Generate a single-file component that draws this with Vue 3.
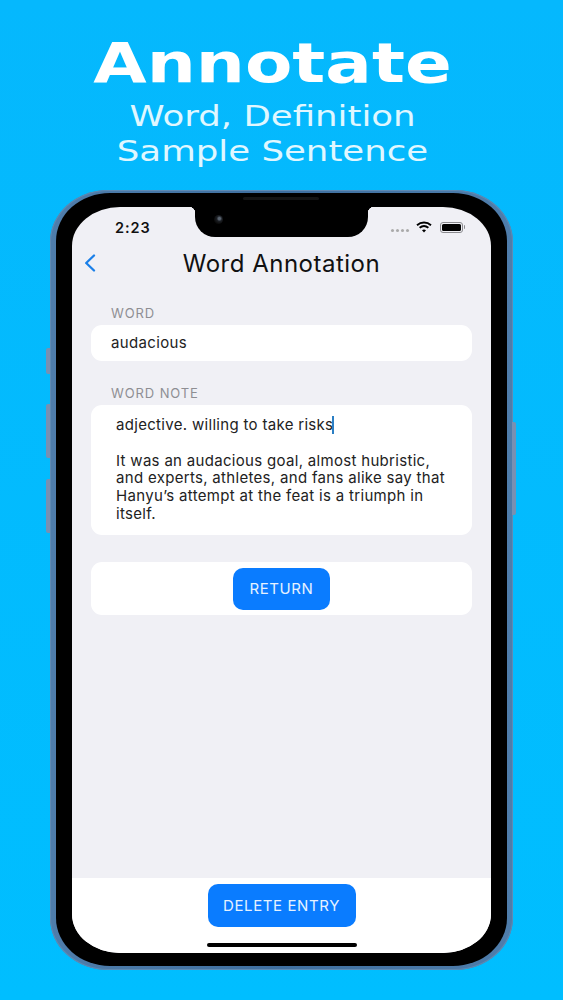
<script setup>
const noteLines = [
  'It was an audacious goal, almost hubristic,',
  'and experts, athletes, and fans alike say that',
  'Hanyu\u2019s attempt at the feat is a triumph in',
  'itself.'
]
</script>

<template>
  <div class="page">
    <header class="hero">
      <h1 class="title">Annotate</h1>
      <p class="sub">Word, Definition</p>
      <p class="sub">Sample Sentence</p>
    </header>

    <div class="phone">
      <i class="side left one"></i>
      <i class="side left two"></i>
      <i class="side left three"></i>
      <i class="side right"></i>
      <div class="bezel">
        <span class="speaker"></span>
        <div class="screen">
          <div class="notch">
            <span class="camera"></span>
          </div>

          <div class="status">
            <span class="time">2:23</span>
            <div class="status-icons">
              <span class="dots"><i></i><i></i><i></i><i></i></span>
              <svg class="wifi" width="16" height="12" viewBox="0 0 16 12">
                <path d="M1 4.2C5 .6 11 .6 15 4.2" fill="none" stroke="#000" stroke-width="1.9" />
                <path d="M3.6 6.8c2.6-2.2 6.2-2.2 8.8 0" fill="none" stroke="#000" stroke-width="1.9" />
                <path d="M6 9.2c1.2-.9 2.8-.9 4 0L8 11.4z" fill="#000" />
              </svg>
              <span class="battery"><i></i></span>
            </div>
          </div>

          <nav class="navbar">
            <svg class="back" width="14" height="20" viewBox="0 0 14 20">
              <path d="M11 2.5 3.2 10 11 17.5" fill="none" stroke="#1a7fe8" stroke-width="2.3" stroke-linecap="round" stroke-linejoin="round" />
            </svg>
            <span class="nav-title">Word Annotation</span>
          </nav>

          <main class="form">
            <label class="label first">WORD</label>
            <div class="card word">audacious</div>

            <label class="label second">WORD NOTE</label>
            <div class="card note">
              <div class="line def">adjective. willing to take risks<span class="caret"></span></div>
              <div class="line blank"></div>
              <div v-for="l in noteLines" :key="l" class="line">{{ l }}</div>
            </div>

            <div class="card action">
              <button class="btn return">RETURN</button>
            </div>
          </main>

          <footer class="bottom">
            <button class="btn delete">DELETE ENTRY</button>
            <span class="home"></span>
          </footer>
        </div>
      </div>
    </div>
  </div>
</template>

<style>
html, body { margin: 0; background: #00bbff; }
</style>

<style scoped>
.page {
  width: 563px;
  height: 1000px;
  overflow: hidden;
  box-sizing: border-box;
  background: linear-gradient(#05b8fd, #00beff);
  display: flex;
  flex-direction: column;
  align-items: center;
}
.hero {
  height: 190px;
  flex: none;
  text-align: center;
  color: #fff;
  font-family: "DejaVu Sans", sans-serif;
  box-sizing: border-box;
  padding: 31px 18px 0 0;
  width: 100%;
}
.title {
  margin: 0 0 4px;
  font-size: 55px;
  line-height: 64px;
  font-weight: 700;
  transform: scaleX(1.255);
}
.sub {
  margin: 0;
  font-size: 28px;
  line-height: 35px;
  font-weight: 400;
  color: #e0f7ff;
  transform: scaleX(1.27);
}
.phone {
  position: relative;
  flex: none;
  width: 463px;
  height: 780px;
  box-sizing: border-box;
  padding: 3px 6px 4px;
  border-radius: 58px / 52px;
  background: linear-gradient(90deg, #4f7dab, #3f6f9f 50%, #4f7dab);
  box-shadow: inset 0 0 0 1px #5f8ab3;
}
.side {
  position: absolute;
  width: 4px;
  background: #7890b2;
}
.side.left { left: -4px; border-radius: 2px 0 0 2px; }
.side.one { top: 158px; height: 26px; }
.side.two { top: 214px; height: 54px; }
.side.three { top: 289px; height: 54px; }
.side.right { right: -3px; top: 232px; height: 93px; border-radius: 0 2px 2px 0; }
.bezel {
  position: relative;
  height: 100%;
  box-sizing: border-box;
  padding: 14px 16px 13px;
  background: #000;
  border-radius: 54px / 48px;
}
.screen {
  position: relative;
  height: 100%;
  display: flex;
  flex-direction: column;
  overflow: hidden;
  background: #f0f0f5;
  border-radius: 48px / 39px;
  font-family: "Inter", "Open Sans", sans-serif;
  color: #111;
}
.notch {
  position: absolute;
  top: 0;
  left: 123px;
  width: 173px;
  height: 30px;
  background: #000;
  border-radius: 0 0 20px 20px;
}
.notch::before, .notch::after {
  content: "";
  position: absolute;
  top: 0;
  width: 6px;
  height: 6px;
}
.notch::before {
  left: -6px;
  background: radial-gradient(circle at 0 100%, transparent 6px, #000 6.5px);
}
.notch::after {
  right: -6px;
  background: radial-gradient(circle at 100% 100%, transparent 6px, #000 6.5px);
}
.speaker {
  position: absolute;
  left: 187px;
  top: 4px;
  width: 76px;
  height: 3px;
  border-radius: 2px;
  background: #141414;
}
.camera {
  position: absolute;
  left: 19px;
  top: 8px;
  width: 9px;
  height: 9px;
  border-radius: 50%;
  background: radial-gradient(circle at 60% 40%, #5a6470 0 15%, #1c1f24 35%, #0a0a0a 70%);
}
.status {
  flex: none;
  height: 40px;
  display: flex;
  justify-content: space-between;
  align-items: center;
  box-sizing: border-box;
  padding: 0 28px 0 43px;
}
.time {
  font-size: 14.5px;
  font-weight: 600;
  letter-spacing: .9px;
  color: #111;
}
.status-icons {
  display: flex;
  align-items: center;
  gap: 8px;
}
.dots { display: flex; gap: 2px; margin-right: -1px; margin-top: 6px; }
.dots i { width: 3px; height: 3px; border-radius: 50%; background: #aaa; }
.wifi { display: block; }
.battery {
  position: relative;
  display: block;
  box-sizing: border-box;
  width: 23px;
  height: 11px;
  border: 1px solid #8a8a8e;
  border-radius: 3px;
  padding: 1px;
}
.battery i { display: block; height: 100%; background: #000; border-radius: 1.5px; }
.battery::after {
  content: "";
  position: absolute;
  right: -3px;
  top: 2.5px;
  width: 1.5px;
  height: 4px;
  background: #8a8a8e;
  border-radius: 0 1px 1px 0;
}
.navbar {
  position: relative;
  flex: none;
  height: 32px;
  display: flex;
  align-items: center;
  justify-content: center;
}
.back { position: absolute; left: 11px; top: 6px; }
.nav-title {
  font-size: 24px;
  font-weight: 400;
  color: #111;
  letter-spacing: .5px;
  padding-top: 1px;
}
.form {
  flex: 1;
  box-sizing: border-box;
  padding: 0 19px;
  display: flex;
  flex-direction: column;
}
.label {
  display: block;
  height: 16px;
  line-height: 16px;
  font-size: 13px;
  color: #8e8e93;
  padding-left: 20px;
  letter-spacing: .9px;
}
.label.first { margin-top: 26px; margin-bottom: 4px; }
.label.second { margin-top: 24px; margin-bottom: 4px; }
.card {
  background: #fff;
  border-radius: 11px;
}
.word {
  height: 36px;
  line-height: 36px;
  padding-left: 20px;
  font-size: 15px;
  letter-spacing: .35px;
  color: #222;
}
.note {
  height: 130px;
  box-sizing: border-box;
  padding: 11px 0 0 25px;
  font-size: 15px;
  line-height: 17.7px;
  letter-spacing: .31px;
  color: #222;
  white-space: nowrap;
}
.line.blank { height: 17.7px; }
.caret {
  display: inline-block;
  width: 2px;
  height: 18px;
  background: #2b7fc4;
  vertical-align: -4px;
  margin-left: -1px;
}
.action {
  margin-top: 27px;
  height: 53px;
  display: flex;
  justify-content: center;
  align-items: center;
}
.btn {
  border: 0;
  background: #0a7cff;
  color: #e6f2ff;
  font-family: "Inter", "Open Sans", sans-serif;
  font-size: 15px;
  letter-spacing: .6px;
  padding: 0;
}
.return {
  width: 97px;
  height: 42px;
  border-radius: 10px;
}
.bottom {
  flex: none;
  position: relative;
  height: 75px;
  background: #fff;
  display: flex;
  justify-content: center;
  box-sizing: border-box;
  padding-top: 6px;
}
.delete {
  width: 148px;
  height: 43px;
  border-radius: 10px;
}
.home {
  position: absolute;
  left: 135px;
  bottom: 6px;
  width: 150px;
  height: 4px;
  border-radius: 2px;
  background: #000;
}
</style>
